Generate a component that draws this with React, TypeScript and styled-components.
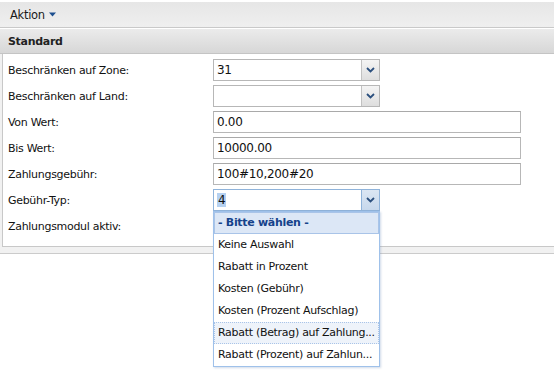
import styled, { createGlobalStyle, css } from "styled-components";

const GlobalStyle = createGlobalStyle`
  html, body {
    margin: 0;
    padding: 0;
    background: #ffffff;
  }

  body {
    font-family: "DejaVu Sans", "Liberation Sans", sans-serif;
    font-size: 11px;
    letter-spacing: -0.3px;
    color: #111111;
  }
`;

const DIV_Page = styled.div`
  width: 554px;
  min-height: 377px;
  padding-top: 2px;
  box-sizing: border-box;
  background: #ffffff;
`;

const DIV_Toolbar = styled.div`
  display: flex;
  align-items: center;
  height: 25px;
  padding-left: 10px;
  background: linear-gradient(#e6e6e6, #efefef);
  border-bottom: 1px solid #c9c9c9;
`;

const SPAN_MenuButton = styled.span`
  display: flex;
  align-items: center;
  column-gap: 4px;
  font-size: 11.5px;
  color: #1a1a1a;
`;

const DIV_Frame = styled.div`
  margin-top: 1px;
  background: #f1f1f1;
  border-bottom: 1px solid #cbcbcb;
  padding-bottom: 6px;
`;

const H2_PanelHeader = styled.h2`
  margin: 0;
  height: 24px;
  display: flex;
  align-items: center;
  padding-left: 8px;
  font-size: 11px;
  font-weight: bold;
  color: #222222;
  background: linear-gradient(#ebebeb, #d7d7d7);
  border-bottom: 1px solid #c4c4c4;
`;

const DIV_PanelBody = styled.div`
  margin-left: 2px;
  background: #ffffff;
  border-left: 1px solid #c8c8c8;
  border-bottom: 1px solid #c8c8c8;
  padding: 5px 0 9px 5px;
  display: flex;
  flex-direction: column;
  row-gap: 4px;
`;

const DIV_FormRow = styled.div`
  display: grid;
  grid-template-columns: 205px 1fr;
  align-items: center;
  height: 22px;
`;

const LABEL_Field = styled.label`
  white-space: nowrap;
`;

const DIV_ComboWrap = styled.div`
  position: relative;
  width: 167px;
`;

const DIV_Combo = styled.div<{ $focused?: boolean }>`
  display: flex;
  height: 20px;
  border: 1px solid ${(p) => (p.$focused ? "#8fb3da" : "#b7b7b7")};
  background: #ffffff;
`;

const DIV_ComboValue = styled.div`
  flex: 1;
  display: flex;
  align-items: center;
  padding-left: 3px;
  font-size: 12px;
`;

const SPAN_Selected = styled.span`
  background: #b5d1f1;
  padding: 0 1px;
`;

const DIV_Trigger = styled.div<{ $focused?: boolean }>`
  width: 17px;
  display: flex;
  align-items: center;
  justify-content: center;
  border-left: 1px solid ${(p) => (p.$focused ? "#8fb3da" : "#c2c2c2")};
  ${(p) =>
    p.$focused
      ? css`
          background: linear-gradient(#dbe6f3, #c7d8ec);
        `
      : css`
          background: linear-gradient(#f4f4f4, #dedede);
        `}
`;

const INPUT_Text = styled.input`
  box-sizing: border-box;
  width: 308px;
  height: 22px;
  margin: 0;
  padding: 0 3px;
  border: 1px solid #b7b7b7;
  border-top-color: #a9a9a9;
  font-family: "DejaVu Sans", "Liberation Sans", sans-serif;
  font-size: 12px;
  letter-spacing: -0.3px;
  color: #111111;
  background: #ffffff;
  outline: none;
`;

const UL_List = styled.ul`
  position: absolute;
  top: 100%;
  left: 0;
  width: 165px;
  margin: 0;
  padding: 0;
  list-style: none;
  background: #ffffff;
  border: 1px solid #9fc1ea;
  box-shadow: 1px 1px 2px rgba(120, 150, 190, 0.35);
  z-index: 10;
`;

const LI_Item = styled.li<{ $kind?: "header" | "hover" }>`
  box-sizing: border-box;
  height: 22px;
  line-height: 20px;
  padding: 0 3px;
  border: 1px solid transparent;
  white-space: nowrap;
  overflow: hidden;
  ${(p) =>
    p.$kind === "header" &&
    css`
      background: #dce7f6;
      border-color: #a9c4e8;
      color: #15428b;
      font-weight: bold;
    `}
  ${(p) =>
    p.$kind === "hover" &&
    css`
      background: #eef3fa;
      border: 1px dotted #a9c4e8;
    `}
`;

const Chevron = () => (
  <svg width="9" height="6" viewBox="0 0 9 6">
    <path d="M1 1 L4.5 4.5 L8 1" fill="none" stroke="#2b4f7e" strokeWidth="1.8" />
  </svg>
);

const Caret = () => (
  <svg width="7" height="5" viewBox="0 0 7 5">
    <path d="M0 0.5 L7 0.5 L3.5 4.5 Z" fill="#1d4f8f" />
  </svg>
);

type ComboProps = {
  value?: string;
  focused?: boolean;
  options?: string[];
};

const Combo = ({ value, focused, options }: ComboProps) => (
  <DIV_ComboWrap>
    <DIV_Combo $focused={focused}>
      <DIV_ComboValue>
        {focused && value ? <SPAN_Selected>{value}</SPAN_Selected> : value}
      </DIV_ComboValue>
      <DIV_Trigger $focused={focused}>
        <Chevron />
      </DIV_Trigger>
    </DIV_Combo>
    {options && (
      <UL_List>
        {options.map((o, i) => (
          <LI_Item
            key={o}
            $kind={i === 0 ? "header" : i === 5 ? "hover" : undefined}
          >
            {o}
          </LI_Item>
        ))}
      </UL_List>
    )}
  </DIV_ComboWrap>
);

const typeOptions = [
  "- Bitte wählen -",
  "Keine Auswahl",
  "Rabatt in Prozent",
  "Kosten (Gebühr)",
  "Kosten (Prozent Aufschlag)",
  "Rabatt (Betrag) auf Zahlung...",
  "Rabatt (Prozent) auf Zahlun...",
];

const App = () => {
  return (
    <>
      <GlobalStyle />
      <DIV_Page>
        <DIV_Toolbar>
          <SPAN_MenuButton>
            Aktion <Caret />
          </SPAN_MenuButton>
        </DIV_Toolbar>
        <DIV_Frame>
          <H2_PanelHeader>Standard</H2_PanelHeader>
          <DIV_PanelBody>
            <DIV_FormRow>
              <LABEL_Field>Beschränken auf Zone:</LABEL_Field>
              <Combo value="31" />
            </DIV_FormRow>
            <DIV_FormRow>
              <LABEL_Field>Beschränken auf Land:</LABEL_Field>
              <Combo />
            </DIV_FormRow>
            <DIV_FormRow>
              <LABEL_Field>Von Wert:</LABEL_Field>
              <INPUT_Text defaultValue="0.00" />
            </DIV_FormRow>
            <DIV_FormRow>
              <LABEL_Field>Bis Wert:</LABEL_Field>
              <INPUT_Text defaultValue="10000.00" />
            </DIV_FormRow>
            <DIV_FormRow>
              <LABEL_Field>Zahlungsgebühr:</LABEL_Field>
              <INPUT_Text defaultValue="100#10,200#20" />
            </DIV_FormRow>
            <DIV_FormRow>
              <LABEL_Field>Gebühr-Typ:</LABEL_Field>
              <Combo value="4" focused options={typeOptions} />
            </DIV_FormRow>
            <DIV_FormRow>
              <LABEL_Field>Zahlungsmodul aktiv:</LABEL_Field>
              <div />
            </DIV_FormRow>
          </DIV_PanelBody>
        </DIV_Frame>
      </DIV_Page>
    </>
  );
};

export default App;
